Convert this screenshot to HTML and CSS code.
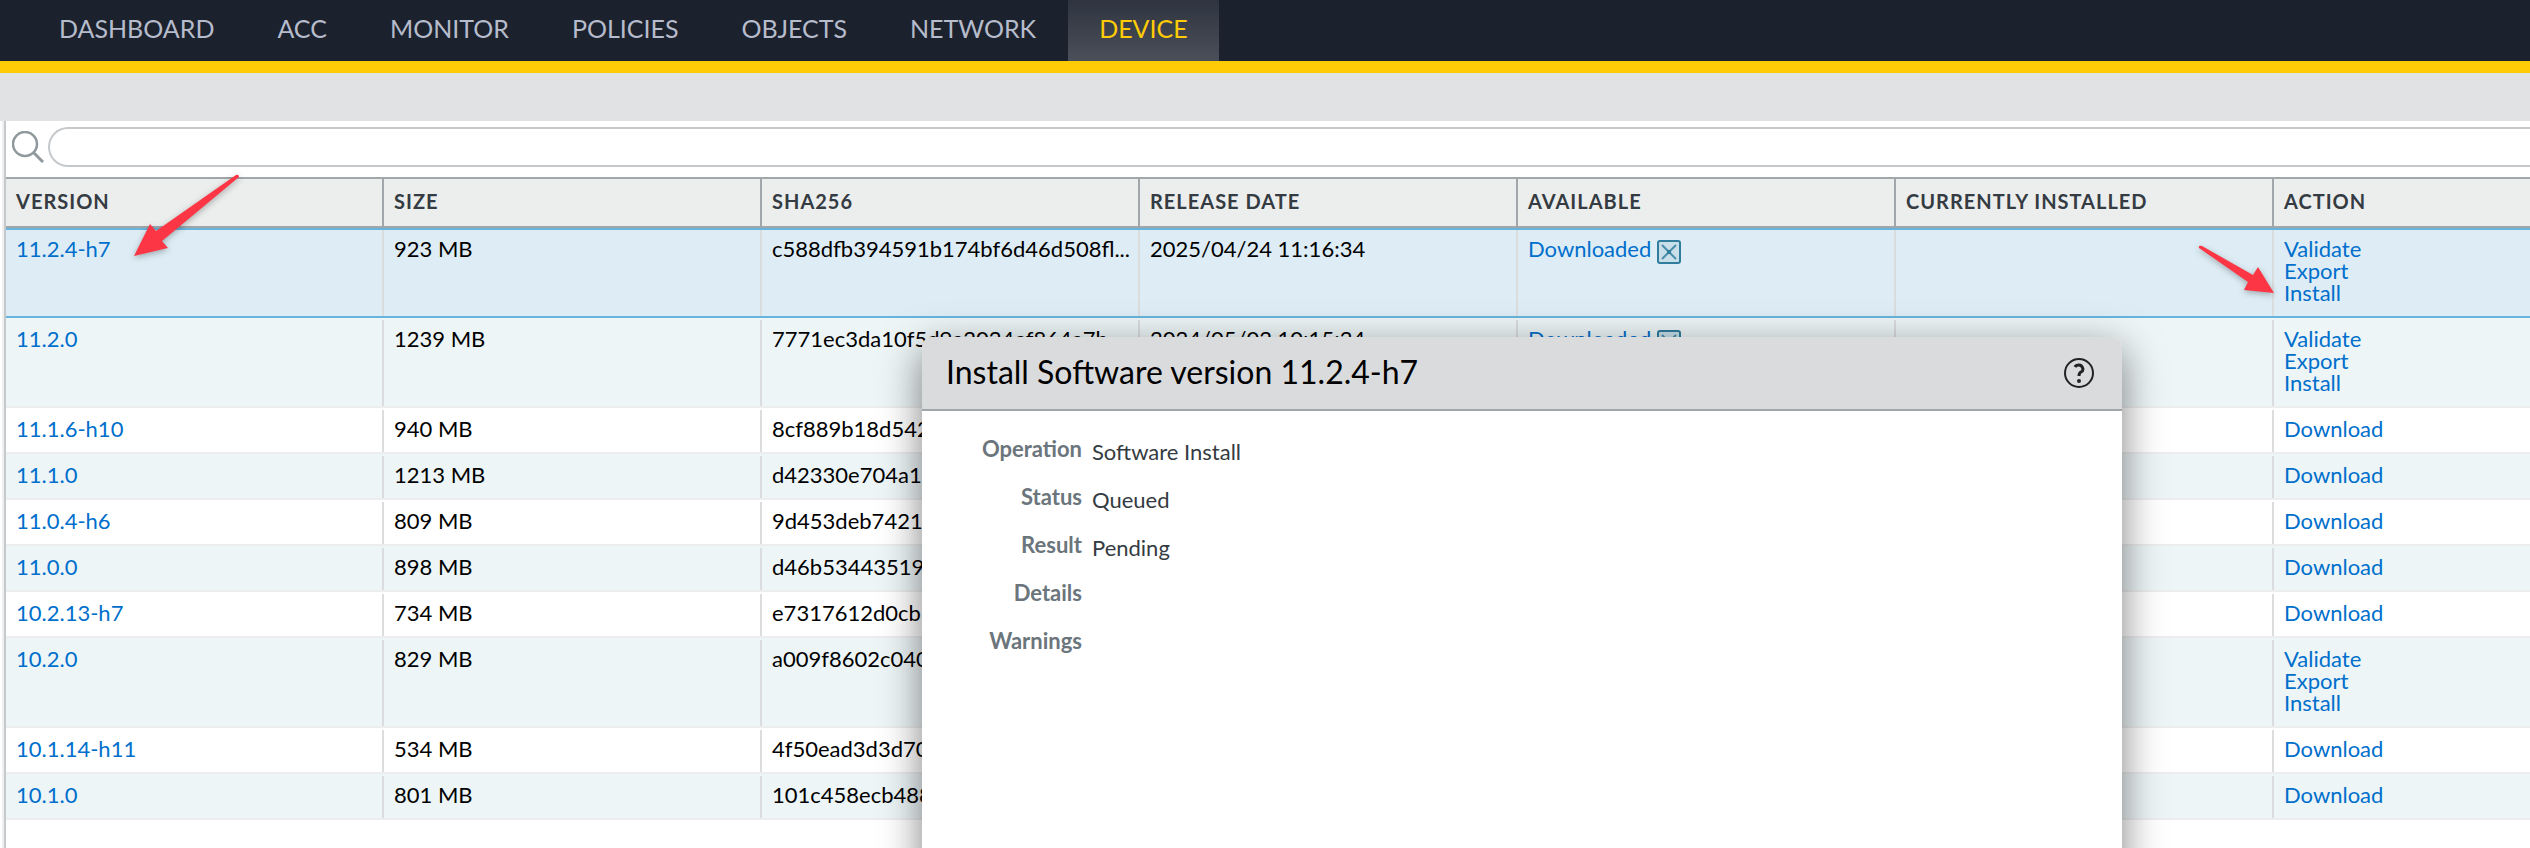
FILE: index.html
```html
<!DOCTYPE html>
<html lang="en">
<head>
    <meta charset="utf-8">
    <title>Device - Software</title>
    <link rel="stylesheet" href="styles.css">
</head>
<body>
    <!-- Icons used more than once -->
    <svg class="sprite" aria-hidden="true">
        <symbol id="icon-delete" viewBox="0 0 24 24">
            <rect x="1" y="1" width="22" height="22" rx="2" fill="#c8dfe9" stroke="#2f7c9d" stroke-width="2"/>
            <path d="M5 5 19 19M19 5 5 19" stroke="#4a8eaa" stroke-width="2"/>
            <rect x="10" y="10" width="4" height="4" fill="#2f7c9d"/>
        </symbol>
    </svg>

    <nav class="main-nav">
        <a href="#">DASHBOARD</a>
        <a href="#">ACC</a>
        <a href="#">MONITOR</a>
        <a href="#">POLICIES</a>
        <a href="#">OBJECTS</a>
        <a href="#">NETWORK</a>
        <a href="#" class="active">DEVICE</a>
    </nav>
    <div class="toolbar"></div>

    <main class="panel">
        <form class="search">
            <svg class="search-icon" viewBox="0 0 32 32" aria-hidden="true">
                <circle cx="13" cy="13" r="12" fill="none" stroke="#8f989c" stroke-width="2.5"/>
                <path d="M22 22 31 31" stroke="#8f989c" stroke-width="3"/>
            </svg>
            <input type="text" class="search-box" aria-label="Search">
        </form>

        <table class="grid">
            <thead>
                <tr>
                    <th>VERSION</th>
                    <th>SIZE</th>
                    <th>SHA256</th>
                    <th>RELEASE DATE</th>
                    <th>AVAILABLE</th>
                    <th>CURRENTLY INSTALLED</th>
                    <th class="last">ACTION</th>
                </tr>
            </thead>
            <tbody>
                <tr class="selected">
                    <td class="marked">
                        <a href="#">11.2.4-h7</a>
                        <svg class="arrow arrow-version" viewBox="0 0 106 84" aria-hidden="true">
                            <path d="M0 82 16 50 22 57 102 1Q105 0 105 3L28 67 34 74Z" fill="#fc3644"/>
                        </svg>
                    </td>
                    <td>923 MB</td>
                    <td class="hash">c588dfb394591b174bf6d46d508fl...</td>
                    <td>2025/04/24 11:16:34</td>
                    <td>
                        <div class="available">
                            <a href="#">Downloaded</a>
                            <button type="button" class="delete" aria-label="Delete"><svg><use href="#icon-delete"/></svg></button>
                        </div>
                    </td>
                    <td></td>
                    <td class="actions last marked">
                        <a href="#">Validate</a>
                        <a href="#">Export</a>
                        <a href="#">Install</a>
                        <svg class="arrow arrow-install" viewBox="0 0 78 50" aria-hidden="true">
                            <path d="M76 48 60 22 55 30 4 1Q0 0 1 3L50 37 46 45Z" fill="#fc3644"/>
                        </svg>
                    </td>
                </tr>
                <tr>
                    <td><a href="#">11.2.0</a></td>
                    <td>1239 MB</td>
                    <td class="hash">7771ec3da10f5d9a2024ef864a7b...</td>
                    <td>2024/05/02 10:15:24</td>
                    <td>
                        <div class="available">
                            <a href="#">Downloaded</a>
                            <button type="button" class="delete" aria-label="Delete"><svg><use href="#icon-delete"/></svg></button>
                        </div>
                    </td>
                    <td></td>
                    <td class="actions last">
                        <a href="#">Validate</a>
                        <a href="#">Export</a>
                        <a href="#">Install</a>
                    </td>
                </tr>
                <tr>
                    <td><a href="#">11.1.6-h10</a></td>
                    <td>940 MB</td>
                    <td class="hash">8cf889b18d542</td>
                    <td></td>
                    <td></td>
                    <td></td>
                    <td class="actions last"><a href="#">Download</a></td>
                </tr>
                <tr>
                    <td><a href="#">11.1.0</a></td>
                    <td>1213 MB</td>
                    <td class="hash">d42330e704a1</td>
                    <td></td>
                    <td></td>
                    <td></td>
                    <td class="actions last"><a href="#">Download</a></td>
                </tr>
                <tr>
                    <td><a href="#">11.0.4-h6</a></td>
                    <td>809 MB</td>
                    <td class="hash">9d453deb7421</td>
                    <td></td>
                    <td></td>
                    <td></td>
                    <td class="actions last"><a href="#">Download</a></td>
                </tr>
                <tr>
                    <td><a href="#">11.0.0</a></td>
                    <td>898 MB</td>
                    <td class="hash">d46b53443519</td>
                    <td></td>
                    <td></td>
                    <td></td>
                    <td class="actions last"><a href="#">Download</a></td>
                </tr>
                <tr>
                    <td><a href="#">10.2.13-h7</a></td>
                    <td>734 MB</td>
                    <td class="hash">e7317612d0cb</td>
                    <td></td>
                    <td></td>
                    <td></td>
                    <td class="actions last"><a href="#">Download</a></td>
                </tr>
                <tr>
                    <td><a href="#">10.2.0</a></td>
                    <td>829 MB</td>
                    <td class="hash">a009f8602c040</td>
                    <td></td>
                    <td></td>
                    <td></td>
                    <td class="actions last">
                        <a href="#">Validate</a>
                        <a href="#">Export</a>
                        <a href="#">Install</a>
                    </td>
                </tr>
                <tr>
                    <td><a href="#">10.1.14-h11</a></td>
                    <td>534 MB</td>
                    <td class="hash">4f50ead3d3d70</td>
                    <td></td>
                    <td></td>
                    <td></td>
                    <td class="actions last"><a href="#">Download</a></td>
                </tr>
                <tr>
                    <td><a href="#">10.1.0</a></td>
                    <td>801 MB</td>
                    <td class="hash">101c458ecb488</td>
                    <td></td>
                    <td></td>
                    <td></td>
                    <td class="actions last"><a href="#">Download</a></td>
                </tr>
            </tbody>
        </table>
    </main>

    <!-- Install dialog -->
    <div class="dialog" role="dialog" aria-labelledby="dialogTitle">
        <div class="dialog-header">
            <h1 id="dialogTitle">Install Software version 11.2.4-h7</h1>
            <button type="button" class="help" aria-label="Help">
                <svg viewBox="0 0 30 30">
                    <circle cx="15" cy="15" r="14" fill="none" stroke="#222" stroke-width="2"/>
                    <path d="M11 9Q12 7 15 7T19 11Q19 13 17 14T15 18" fill="none" stroke="#222" stroke-width="3"/>
                    <circle cx="15" cy="23" r="2" fill="#222"/>
                </svg>
            </button>
        </div>
        <dl class="dialog-body">
            <dt>Operation</dt>
            <dd>Software Install</dd>
            <dt>Status</dt>
            <dd>Queued</dd>
            <dt>Result</dt>
            <dd>Pending</dd>
            <dt>Details</dt>
            <dd></dd>
            <dt>Warnings</dt>
            <dd></dd>
        </dl>
    </div>
</body>
</html>
```
FILE: styles.css
```css
* {
    box-sizing: border-box;
}

body {
    position: relative;
    display: flex;
    flex-direction: column;
    margin: 0;
    min-height: 100vh;
    overflow: hidden;
    font-family: Lato, sans-serif;
    font-size: 22px;
    line-height: 22px;
    color: #000;
    background-color: #fff;
}

a {
    color: #006fcc;
    text-decoration: none;
}

button {
    padding: 0;
    border: none;
    background: none;
    cursor: pointer;
}

.sprite {
    display: none;
}

/* Navigation */
.main-nav {
    display: flex;
    gap: 1px;
    height: 73px;
    padding-left: 28px;
    background-color: #1c212e;
    border-bottom: 12px solid #ffcb06;
}

.main-nav a {
    padding: 16px 31px 0;
    font-size: 25px;
    line-height: 24px;
    color: #b6bccb;
}

.main-nav a.active {
    color: #ffcb06;
    background: linear-gradient(#2f3540, #4a4f59);
}

.toolbar {
    height: 48px;
    background-color: #e1e2e4;
}

/* Software list */
.panel {
    flex: 1;
    margin-left: 2px;
    border-left: 2px solid #f0f0f0;
    box-shadow: inset 2px 0 #c5c9cc;
    padding-left: 2px;
}

.search {
    display: flex;
    align-items: center;
    gap: 4px;
    padding: 6px 0 10px 6px;
}

.search-icon {
    width: 32px;
    height: 32px;
}

.search-box {
    flex: 1;
    height: 40px;
    padding: 0 16px;
    border: 2px solid #c5c9cc;
    border-right: none;
    border-radius: 20px 0 0 20px;
    font: inherit;
    outline: none;
}

.grid {
    width: 100%;
    table-layout: fixed;
    border-spacing: 0;
}

.grid th {
    width: 378px;
    padding: 11px 12px 14px 10px;
    border-top: 2px solid #a0a6aa;
    border-bottom: 2px solid #a0a6aa;
    background: linear-gradient(#a0a6aa, #a0a6aa) right / 2px 100% no-repeat padding-box, #eceeed;
    color: #343b42;
    font-size: 20px;
    font-weight: bold;
    letter-spacing: 1px;
    text-align: left;
}

.grid td {
    padding: 8px 6px 12px 10px;
    border-top: 2px solid transparent;
    border-bottom: 2px solid #eceeed;
    background: linear-gradient(#dadcdd, #dadcdd) right / 2px 100% no-repeat padding-box;
    vertical-align: top;
}

.grid tbody tr:nth-child(even) {
    background-color: #edf5f7;
}

.grid tbody tr.selected {
    background-color: #deedf5;
}

.grid .selected td {
    border-color: #67b5dc;
}

.grid th.last {
    width: auto;
    background: #eceeed;
}

.grid td.last {
    background: none;
}

.hash {
    overflow: hidden;
    white-space: nowrap;
    text-overflow: ellipsis;
}

.actions a {
    display: block;
    width: max-content;
}

.available {
    display: flex;
    gap: 6px;
    height: 22px;
}

.delete {
    width: 24px;
    height: 24px;
    margin-top: 2px;
}

.delete svg,
.help svg {
    display: block;
    width: 100%;
    height: 100%;
}

/* Pointer arrows */
.marked {
    position: relative;
}

.arrow {
    position: absolute;
    z-index: 1;
    filter: drop-shadow(0 2px 3px rgba(0, 0, 0, 0.3));
}

.arrow-version {
    top: -56px;
    left: 128px;
    width: 106px;
    height: 84px;
}

.arrow-install {
    top: 15px;
    left: -76px;
    width: 78px;
    height: 50px;
}

/* Dialog */
.dialog {
    position: absolute;
    z-index: 2;
    top: 337px;
    bottom: -40px;
    left: 922px;
    width: 1200px;
    border-radius: 10px;
    background-color: #fff;
    box-shadow: 0 12px 40px rgba(0, 0, 0, 0.5);
}

.dialog-header {
    display: flex;
    align-items: center;
    justify-content: space-between;
    height: 74px;
    padding: 0 28px 0 24px;
    border-bottom: 2px solid #a0a6aa;
    border-radius: 10px 10px 0 0;
    background-color: #dadbdd;
}

.dialog-header h1 {
    margin: 0;
    padding-bottom: 2px;
    font-size: 32px;
    font-weight: normal;
    line-height: 40px;
}

.help {
    width: 30px;
    height: 30px;
}

.dialog-body {
    display: grid;
    grid-template-columns: 160px 1fr;
    grid-auto-rows: 48px;
    column-gap: 10px;
    margin: 0;
    padding-top: 27px;
}

.dialog-body dt {
    color: #6b757c;
    font-weight: bold;
    text-align: right;
}

.dialog-body dd {
    margin: 0;
    padding-top: 3px;
    color: #343b42;
}
```
